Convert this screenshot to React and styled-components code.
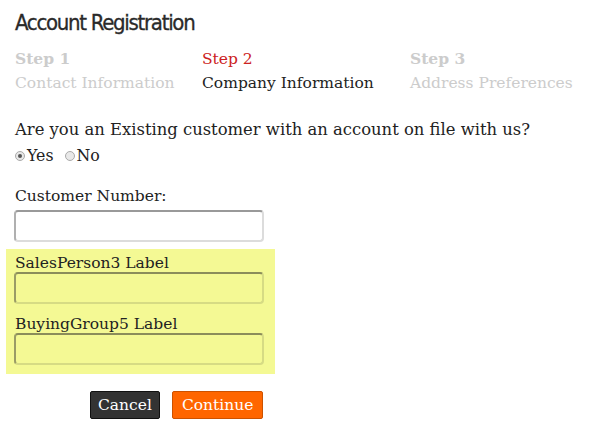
import React, { useState } from "react";
import styled, { createGlobalStyle } from "styled-components";

const Global = createGlobalStyle`
  body {
    margin: 0;
    background: #fff;
    font-family: "DejaVu Serif", "Liberation Serif", serif;
    color: #333;
  }
`;

const Page = styled.div`
  padding: 9px 15px 0 15px;
  width: 590px;
  box-sizing: border-box;
`;

const Title = styled.h1`
  margin: 0;
  font-family: "DejaVu Sans Condensed", "Liberation Sans Narrow", sans-serif;
  font-stretch: condensed;
  font-weight: normal;
  font-size: 22px;
  letter-spacing: -1.3px;
  line-height: 28px;
  color: #2a2a2a;
  -webkit-text-stroke: 0.3px #2a2a2a;
`;

const Steps = styled.div`
  display: grid;
  grid-template-columns: 187px 208px 1fr;
  margin-top: 10px;
`;

const StepCol = styled.div`
  display: flex;
  flex-direction: column;
  font-size: 15.5px;
  line-height: 24px;
  white-space: nowrap;
`;

const StepNo = styled.span`
  color: ${(p) => (p.$active ? "#cc2222" : "#cccccc")};
  font-weight: ${(p) => (p.$active ? "normal" : "bold")};
`;

const StepName = styled.span`
  color: ${(p) => (p.$active ? "#222" : "#cccccc")};
`;

const Question = styled.p`
  margin: 25px 0 0;
  font-size: 16.4px;
  line-height: 20px;
  color: #222;
  white-space: nowrap;
`;

const Radios = styled.div`
  display: flex;
  align-items: center;
  gap: 11px;
  font-size: 15.8px;
  line-height: 18px;
  margin-top: 7px;
`;

const RadioLabel = styled.label`
  display: flex;
  align-items: center;
  color: #222;
`;

const Dot = styled.span`
  width: 10px;
  height: 10px;
  border-radius: 50%;
  border: 1px solid #aaa;
  background: #e8e8e8;
  box-sizing: border-box;
  display: inline-flex;
  align-items: center;
  justify-content: center;
  margin-right: 2px;
  &::after {
    content: "";
    width: 4px;
    height: 4px;
    border-radius: 50%;
    background: ${(p) => (p.$on ? "#555" : "transparent")};
  }
`;

const Field = styled.div`
  display: flex;
  flex-direction: column;
  margin-top: ${(p) => p.$top || 0}px;
`;

const Label = styled.label`
  font-size: 15.5px;
  line-height: 20px;
  color: #222;
  margin-bottom: ${(p) => (p.$tight ? -1 : 4)}px;
  white-space: nowrap;
`;

const Input = styled.input`
  width: 250px;
  height: 32px;
  box-sizing: border-box;
  margin-left: -1px;
  border: 2px solid #dcdcdc;
  border-top-color: #999;
  border-left-color: #b0b0b0;
  border-radius: 4px;
  background: ${(p) => (p.$hl ? "#f4f994" : "#fff")};
  ${(p) =>
    p.$hl &&
    "border-color: #d6db84; border-top-color: #8b8d5a; border-left-color: #9a9c66;"}
  font-family: inherit;
  font-size: 15px;
  padding: 0 4px;
  outline: none;
  caret-color: #000;
`;

const Highlight = styled.div`
  background: #f4f994;
  margin: 7px 0 0 -9px;
  padding: 4px 9px 9px;
  width: 269px;
  box-sizing: border-box;
`;

const Actions = styled.div`
  display: flex;
  gap: 12px;
  margin: 17px 0 0 75px;
`;

const Btn = styled.button`
  font-family: inherit;
  font-size: 15.5px;
  height: 28px;
  padding: 0 ${(p) => (p.$primary ? 9 : 7)}px;
  border-radius: 2px;
  color: #fff;
  cursor: pointer;
  background: ${(p) => (p.$primary ? "#ff6600" : "#333")};
  border: 1px solid ${(p) => (p.$primary ? "#cc5200" : "#111")};
`;

export default function App() {
  const [existing, setExisting] = useState(true);
  return (
    <>
      <Global />
      <Page>
        <Title>Account Registration</Title>
        <Steps>
          <StepCol>
            <StepNo>Step 1</StepNo>
            <StepName>Contact Information</StepName>
          </StepCol>
          <StepCol>
            <StepNo $active>Step 2</StepNo>
            <StepName $active>Company Information</StepName>
          </StepCol>
          <StepCol>
            <StepNo>Step 3</StepNo>
            <StepName>Address Preferences</StepName>
          </StepCol>
        </Steps>
        <Question>Are you an Existing customer with an account on file with us?</Question>
        <Radios>
          <RadioLabel onClick={() => setExisting(true)}>
            <Dot $on={existing} />Yes
          </RadioLabel>
          <RadioLabel onClick={() => setExisting(false)}>
            <Dot $on={!existing} />No
          </RadioLabel>
        </Radios>
        <Field $top={21}>
          <Label>Customer Number:</Label>
          <Input autoFocus />
        </Field>
        <Highlight>
          <Field>
            <Label $tight>SalesPerson3 Label</Label>
            <Input $hl />
          </Field>
          <Field $top={10}>
            <Label $tight>BuyingGroup5 Label</Label>
            <Input $hl />
          </Field>
        </Highlight>
        <Actions>
          <Btn>Cancel</Btn>
          <Btn $primary>Continue</Btn>
        </Actions>
      </Page>
    </>
  );
}
